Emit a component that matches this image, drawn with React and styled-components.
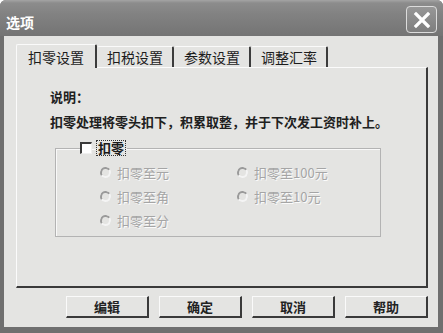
import styled, { createGlobalStyle } from 'styled-components'

const Global = createGlobalStyle`
    html, body {
        margin: 0;
        padding: 0;
        background: #ffffff;
    }
    body {
        font-family: "Noto Sans CJK SC", "Liberation Sans", sans-serif;
        font-size: 13px;
        color: #1a1a1a;
    }
`

const Window = styled.div`
    width: 443px;
    height: 333px;
    display: flex;
    flex-direction: column;
    background: #6f6f6f;
    border-radius: 6px 6px 0 0;
    overflow: hidden;
    box-sizing: border-box;
`

const TitleBar = styled.div`
    height: 36px;
    flex: none;
    display: flex;
    align-items: center;
    justify-content: space-between;
    padding: 0 6px 0 6px;
    background: linear-gradient(#a4a4a4 0px, #8c8c8c 3px, #828282 14px, #747474 36px);
    box-sizing: border-box;
`

const Title = styled.span`
    color: #ffffff;
    font-weight: bold;
    font-size: 14px;
    padding-top: 7px;
`

const CloseButton = styled.div`
    width: 31px;
    height: 27px;
    margin-top: 3px;
    border: 1px solid #dcdcdc;
    border-radius: 4px;
    background: linear-gradient(#979797, #7e7e7e);
    display: flex;
    align-items: center;
    justify-content: center;
    box-sizing: border-box;
`

const Body = styled.div`
    flex: 1;
    margin: 0 5px 6px 4px;
    background: #e4e4e2;
    display: flex;
    flex-direction: column;
    padding: 8px 10px 0 12px;
`

const TabStrip = styled.div`
    display: flex;
    align-items: flex-end;
    height: 23px;
    position: relative;
    z-index: 1;
`

const Tab = styled.div`
    height: ${p => (p.$active ? '24px' : '21px')};
    margin-bottom: ${p => (p.$active ? '-1px' : '0')};
    padding: 0 ${p => (p.$active ? '11px' : '9px')};
    display: flex;
    align-items: center;
    font-size: 14px;
    color: #1c1c1c;
    background: #e4e4e2;
    border-top: 1px solid #fafafa;
    border-left: 1px solid ${p => (p.$first ? '#fafafa' : 'transparent')};
    border-right: 2px solid #3c3c3c;
    border-radius: 2px 2px 0 0;
    box-sizing: border-box;
`

const Panel = styled.div`
    height: 221px;
    border-top: 1px solid #fbfbfb;
    border-left: 1px solid #fbfbfb;
    border-right: 2px solid #3a3a3a;
    border-bottom: 2px solid #3a3a3a;
    box-sizing: border-box;
    padding: 20px 0 0 33px;
    display: flex;
    flex-direction: column;
`

const Note = styled.div`
    font-size: 13px;
    font-weight: bold;
    color: #202020;
    line-height: 18px;
    margin-bottom: ${p => p.$gap || 0}px;
`

const Group = styled.fieldset`
    margin: 9px 0 0 5px;
    width: 326px;
    height: 97px;
    box-sizing: border-box;
    border: 1px solid #b3b3b3;
    box-shadow: inset 1px 1px 0 #f8f8f8;
    padding: 0;
`

const Legend = styled.legend`
    margin-left: 24px;
    padding: 0 2px 0 0;
    display: flex;
    align-items: center;
    gap: 5px;
    height: 16px;
`

const Options = styled.div`
    display: grid;
    grid-template-columns: 137px 120px;
    grid-auto-rows: 24px;
    padding: 4px 0 0 44px;
`

const CheckBox = styled.span`
    width: 12px;
    height: 12px;
    box-sizing: border-box;
    background: #ffffff;
    border-top: 2px solid #3a3a3a;
    border-left: 2px solid #3a3a3a;
    border-right: 1px solid #f0f0f0;
    border-bottom: 1px solid #f0f0f0;
`

const CheckLabel = styled.span`
    font-size: 13px;
    font-weight: bold;
    color: #1a1a1a;
    outline: 1px dotted #333;
    line-height: 14px;
    padding: 0 1px;
`

const Radio = styled.label`
    display: flex;
    align-items: center;
    gap: 6px;
    font-size: 13px;
    color: #a5a5a5;
    text-shadow: 1px 1px 0 #fbfbfb;
    height: 24px;
`

const RadioDot = styled.span`
    width: 11px;
    height: 11px;
    border-radius: 50%;
    box-sizing: border-box;
    border: 2px solid #9a9a9a;
    border-right-color: #f4f4f4;
    border-bottom-color: #f4f4f4;
    background: #e4e4e2;
    transform: rotate(10deg);
`

const ButtonRow = styled.div`
    display: flex;
    justify-content: flex-end;
    gap: 10px;
    margin-top: 8px;
`

const Button = styled.div`
    width: 83px;
    height: 22px;
    box-sizing: border-box;
    display: flex;
    align-items: center;
    justify-content: center;
    font-size: 13px;
    font-weight: bold;
    color: #222;
    background: #e4e4e2;
    border-top: 1px solid #fafafa;
    border-left: 1px solid #fafafa;
    border-right: 2px solid #3a3a3a;
    border-bottom: 2px solid #3a3a3a;
`

const radios = [
    '扣零至元',
    '扣零至100元',
    '扣零至角',
    '扣零至10元',
    '扣零至分',
]

export default function App() {
    return (
        <>
            <Global />
            <Window>
                <TitleBar>
                    <Title>选项</Title>
                    <CloseButton>
                        <svg width="18" height="18" viewBox="0 0 18 18">
                            <path d="M3 3 L15 15 M15 3 L3 15" stroke="#ffffff" strokeWidth="3.2" strokeLinecap="square" />
                        </svg>
                    </CloseButton>
                </TitleBar>
                <Body>
                    <TabStrip>
                        <Tab $active $first>扣零设置</Tab>
                        <Tab>扣税设置</Tab>
                        <Tab>参数设置</Tab>
                        <Tab>调整汇率</Tab>
                    </TabStrip>
                    <Panel>
                        <Note $gap={7}>说明：</Note>
                        <Note>扣零处理将零头扣下，积累取整，并于下次发工资时补上。</Note>
                        <Group>
                            <Legend>
                                <CheckBox />
                                <CheckLabel>扣零</CheckLabel>
                            </Legend>
                            <Options>
                                {radios.map(r => (
                                    <Radio key={r}>
                                        <RadioDot />
                                        {r}
                                    </Radio>
                                ))}
                            </Options>
                        </Group>
                    </Panel>
                    <ButtonRow>
                        <Button>编辑</Button>
                        <Button>确定</Button>
                        <Button>取消</Button>
                        <Button>帮助</Button>
                    </ButtonRow>
                </Body>
            </Window>
        </>
    )
}
